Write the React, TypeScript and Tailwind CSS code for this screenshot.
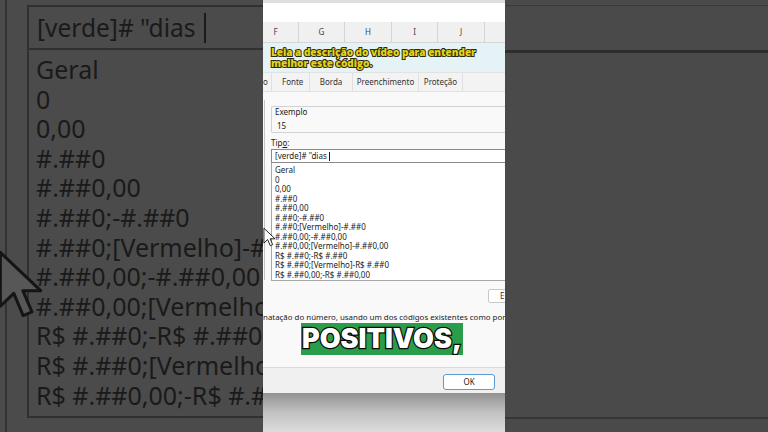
import React from "react";

const items = [
  "Geral",
  "0",
  "0,00",
  "#.##0",
  "#.##0,00",
  "#.##0;-#.##0",
  "#.##0;[Vermelho]-#.##0",
  "#.##0,00;-#.##0,00",
  "#.##0,00;[Vermelho]-#.##0,00",
  "R$ #.##0;-R$ #.##0",
  "R$ #.##0;[Vermelho]-R$ #.##0",
  "R$ #.##0,00;-R$ #.##0,00",
];

function Cursor({
  className,
  fill,
  stroke,
  sw,
}: {
  className: string;
  fill: string;
  stroke: string;
  sw: number;
}) {
  return (
    <svg viewBox="-1 -1 14 22" className={className}>
      <path
        d="M0 0 L0 16 L4 12.2 L6.8 18.8 L9.4 17.7 L6.7 11.4 L12 11.4 Z"
        fill={fill}
        stroke={stroke}
        strokeWidth={sw}
        strokeLinejoin="round"
      />
    </svg>
  );
}

function LeftPanel() {
  return (
    <div className="relative w-[263px] h-full shrink-0 bg-[#4b4b4b] overflow-hidden flex flex-row font-['Noto_Sans',sans-serif] text-[#1a1a1a]">
      <div className="w-[5px] shrink-0" />
      <div className="w-[2px] shrink-0 bg-[#333333]" />
      <div className="w-[20px] shrink-0" />
      <div className="flex-1 min-w-0 mt-[5px] h-[413px] border-l-2 border-t-2 border-b-2 border-[#303030] flex flex-col">
        <div className="h-[43px] shrink-0 border-b-2 border-[#303030] flex items-center pl-[8px] text-[24.5px] leading-[30px] whitespace-nowrap">
          <span>[verde]# "dias</span>
          <span className="ml-[8px] inline-block w-[2px] h-[30px] bg-[#1a1a1a]" />
        </div>
        <div className="pl-[7px] pt-[5px] text-[25px] leading-[29.6px] whitespace-nowrap">
          {items.map((t) => (
            <div key={t}>{t}</div>
          ))}
        </div>
      </div>
      <Cursor
        className="absolute left-[-3px] top-[249px] w-[47px] h-[74px]"
        fill="#575757"
        stroke="#151515"
        sw={0.9}
      />
    </div>
  );
}

function CenterPanel() {
  return (
    <div className="relative w-[242px] h-full shrink-0 overflow-hidden flex flex-col bg-white font-['Noto_Sans',sans-serif] text-[#1a1a1a]">
      <div className="h-[3px] shrink-0 bg-[#dedede]" />
      <div className="h-[19px] shrink-0 bg-white" />
      {/* column header */}
      <div className="h-[21px] shrink-0 bg-[#f0f0f0] border-b border-[#d6d6d6] flex flex-row text-[8px] text-[#444] leading-[20px]">
        <div className="w-[36px] shrink-0 border-r border-[#d4d4d4] text-center pr-[10px]">F</div>
        <div className="w-[46px] shrink-0 border-r border-[#d4d4d4] text-center">G</div>
        <div className="w-[47px] shrink-0 border-r border-[#d4d4d4] text-center">H</div>
        <div className="w-[46px] shrink-0 border-r border-[#d4d4d4] text-center">I</div>
        <div className="w-[47px] shrink-0 border-r border-[#d4d4d4] text-center">J</div>
        <div className="flex-1" />
      </div>
      {/* caption band */}
      <div className="h-[29px] shrink-0 bg-[#e6f3f6] pl-[8px] pt-[4px] font-['Open_Sans',sans-serif] font-extrabold text-[10px] leading-[11px] text-[#e3d31c] [-webkit-text-stroke:2px_#2a2a10] [paint-order:stroke_fill] whitespace-nowrap">
        <div>Leia a descrição do vídeo para entender</div>
        <div>melhor este código.</div>
      </div>
      {/* tabs */}
      <div className="h-[20px] shrink-0 bg-[#f3f3f3] border-t border-[#e2e2e2] border-b border-[#dcdcdc] flex flex-row text-[8px] leading-[18px] text-[#333]">
        <div className="w-[9px] shrink-0 border-r border-[#e0e0e0] overflow-hidden">o</div>
        <div className="w-[38px] shrink-0 border-r border-[#e0e0e0] pl-[10px]">Fonte</div>
        <div className="w-[43px] shrink-0 border-r border-[#e0e0e0] text-center">Borda</div>
        <div className="w-[66px] shrink-0 border-r border-[#e0e0e0] text-center">Preenchimento</div>
        <div className="w-[44px] shrink-0 border-r border-[#e0e0e0] text-center">Proteção</div>
        <div className="flex-1" />
      </div>
      {/* body */}
      <div className="h-[275px] shrink-0 bg-[#f9f9f9] flex flex-col">
        <div className="h-[189px] shrink-0 flex flex-row">
          <div className="w-[8px] shrink-0">
            <div className="ml-[1px] mt-[8px] h-[180px] w-px bg-[#c4c4c4]" />
          </div>
          <div className="flex-1 min-w-0 flex flex-col pt-[14px]">
            <div className="h-[27px] shrink-0 border border-r-0 border-[#d2d2d2] rounded-l-[2px] pl-[3px] text-[8px] leading-[10px]">
              <div>Exemplo</div>
              <div className="mt-[4px] pl-[2px]">15</div>
            </div>
            <div className="mt-[5px] text-[8px] leading-[10px]">
              Tip<span className="underline">o</span>:
            </div>
            <div className="mt-[1px] h-[14px] shrink-0 border border-r-0 border-[#8a8a8a] bg-white pl-[3px] text-[8px] leading-[12px] whitespace-nowrap flex items-center">
              <span>[verde]# "dias</span>
              <span className="ml-[2px] inline-block w-px h-[9px] bg-[#1a1a1a]" />
            </div>
            <div className="h-[118px] shrink-0 border border-t-0 border-r-0 border-[#a8a8a8] bg-white pl-[3px] pt-[2px] text-[8px] leading-[9.5px] whitespace-nowrap overflow-hidden">
              {items.map((t) => (
                <div key={t}>{t}</div>
              ))}
            </div>
          </div>
        </div>
        <div className="h-[24px] shrink-0 pl-[225px] pt-[8px]">
          <div className="w-[40px] h-[14px] border border-[#c8c8c8] rounded-[2px] bg-white text-[8px] leading-[12px] pl-[11px] text-[#333]">
            E
          </div>
        </div>
        <div className="mt-[7px] text-[7.9px] leading-[10px] whitespace-nowrap text-[#222]">
          natação do número, usando um dos códigos existentes como por
        </div>
      </div>
      {/* footer */}
      <div className="h-[26px] shrink-0 bg-[#f0f0f0] border-t border-[#dadada] pl-[180px] pt-[6px]">
        <div className="w-[52px] h-[16px] border border-[#5b9bd5] rounded-[3px] bg-white text-[8px] leading-[14px] text-center text-[#222]">
          OK
        </div>
      </div>
      <div className="flex-1 bg-gradient-to-b from-[#929292] via-[#c2c2c2] to-[#dcdcdc]" />
      {/* overlay caption */}
      <div className="absolute left-[38px] top-[323px] w-[162px] h-[32px] bg-[#2a9d4a] flex items-center justify-center">
        <span className="font-['Inter',sans-serif] font-black text-[27px] leading-[30px] text-white [-webkit-text-stroke:2.5px_#0a0a0a] [paint-order:stroke_fill] whitespace-nowrap">
          POSITIVOS,
        </span>
      </div>
      <Cursor
        className="absolute left-[0px] top-[227px] w-[13px] h-[21px]"
        fill="#ffffff"
        stroke="#111111"
        sw={1}
      />
    </div>
  );
}

function RightPanel() {
  return (
    <div className="flex-1 h-full bg-[#4a4a4a] flex flex-col">
      <div className="h-[5px] shrink-0" />
      <div className="h-px shrink-0 bg-[#3a3a3a]" />
      <div className="h-[44px] shrink-0" />
      <div className="h-[3px] shrink-0 bg-[#2e2e2e]" />
      <div className="h-[364px] shrink-0" />
      <div className="h-[2px] shrink-0 bg-[#363636]" />
      <div className="flex-1" />
    </div>
  );
}

export default function App() {
  return (
    <div className="w-[768px] h-[432px] flex flex-row overflow-hidden bg-[#4a4a4a]">
      <LeftPanel />
      <CenterPanel />
      <RightPanel />
    </div>
  );
}
